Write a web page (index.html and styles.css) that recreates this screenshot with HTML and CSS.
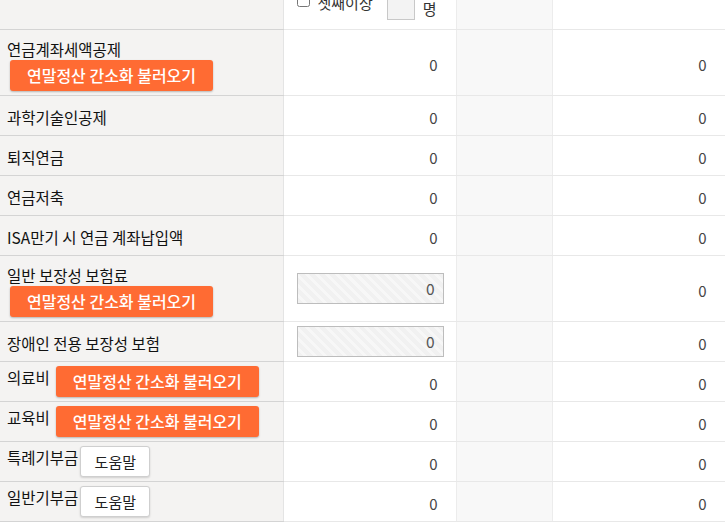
FILE: index.html
```html
<!DOCTYPE html>
<html>

	<head>
		<meta charset="UTF-8">
		<title>연말정산 공제 입력</title>
		<link rel="stylesheet" href="styles.css">
	</head>

	<body>
		<table class="deduct">
			<colgroup>
				<col class="c-label">
				<col class="c-main">
				<col class="c-mid">
				<col class="c-side">
			</colgroup>
			<tr class="row-top">
				<th></th>
				<td class="num">
					<div class="child">
						<input type="checkbox" class="chk">
						<span class="child-txt">셋째이상</span>
						<span class="child-box"></span>
						<span class="child-unit">명</span>
					</div>
				</td>
				<td class="mid"></td>
				<td class="num"></td>
			</tr>
			<tr>
				<th class="stack">
					<div class="lbl">연금계좌세액공제</div>
					<a href="##" class="btn-load">연말정산 간소화 불러오기</a>
				</th>
				<td class="num">0</td>
				<td class="mid"></td>
				<td class="num">0</td>
			</tr>
			<tr>
				<th>과학기술인공제</th>
				<td class="num">0</td>
				<td class="mid"></td>
				<td class="num">0</td>
			</tr>
			<tr>
				<th>퇴직연금</th>
				<td class="num">0</td>
				<td class="mid"></td>
				<td class="num">0</td>
			</tr>
			<tr>
				<th>연금저축</th>
				<td class="num">0</td>
				<td class="mid"></td>
				<td class="num">0</td>
			</tr>
			<tr>
				<th>ISA만기 시 연금 계좌납입액</th>
				<td class="num">0</td>
				<td class="mid"></td>
				<td class="num">0</td>
			</tr>
			<tr>
				<th class="stack">
					<div class="lbl">일반 보장성 보험료</div>
					<a href="##" class="btn-load">연말정산 간소화 불러오기</a>
				</th>
				<td class="inp"><div class="ro">0</div></td>
				<td class="mid"></td>
				<td class="num">0</td>
			</tr>
			<tr>
				<th>장애인 전용 보장성 보험</th>
				<td class="inp"><div class="ro">0</div></td>
				<td class="mid"></td>
				<td class="num">0</td>
			</tr>
			<tr>
				<th class="inline"><span>의료비</span><a href="##" class="btn-load">연말정산 간소화 불러오기</a></th>
				<td class="num">0</td>
				<td class="mid"></td>
				<td class="num">0</td>
			</tr>
			<tr>
				<th class="inline"><span>교육비</span><a href="##" class="btn-load">연말정산 간소화 불러오기</a></th>
				<td class="num">0</td>
				<td class="mid"></td>
				<td class="num">0</td>
			</tr>
			<tr>
				<th class="inline"><span>특례기부금</span><a href="##" class="btn-help">도움말</a></th>
				<td class="num">0</td>
				<td class="mid"></td>
				<td class="num">0</td>
			</tr>
			<tr>
				<th class="inline"><span>일반기부금</span><a href="##" class="btn-help">도움말</a></th>
				<td class="num">0</td>
				<td class="mid"></td>
				<td class="num">0</td>
			</tr>
		</table>
	</body>

</html>
```

FILE: styles.css
```css
* {
	margin: 0;
	padding: 0;
	box-sizing: border-box;
}

body {
	background: #fff;
	font-family: "Noto Sans CJK KR", "Noto Sans", sans-serif;
	font-size: 15.5px;
	color: #111;
}

.deduct {
	width: 725px;
	border-collapse: collapse;
	table-layout: fixed;
}

.c-label {
	width: 283px;
}

.c-main {
	width: 173px;
}

.c-mid {
	width: 96px;
}

.c-side {
	width: 173px;
}

.deduct tr {
	height: 40px;
}

.deduct th {
	background: #f4f3f2;
	border-bottom: 1px solid #d4d4d4;
	border-right: 1px solid #e4e4e4;
	text-align: left;
	font-weight: normal;
	padding: 4px 7px 0;
	line-height: 20px;
	white-space: nowrap;
}

.deduct td {
	border-bottom: 1px solid #e8e8e8;
	border-right: 1px solid #ececec;
	padding-top: 4px;
}

.deduct td.mid {
	background: #f8f8f8;
}

.deduct td.num {
	text-align: right;
	padding-right: 18px;
	color: #444;
	font-size: 15px;
}

/* 顶部被截掉的一行 */
.deduct tr.row-top {
	height: 29px;
}

.deduct .row-top td,
.deduct .row-top th {
	height: 29px;
	padding: 0;
}

.child {
	height: 28px;
	overflow: hidden;
	display: flex;
	align-items: flex-end;
	padding-left: 13px;
	color: #333;
	text-align: left;
}

.chk {
	width: 13px;
	height: 13px;
	margin: 0 8px 21px 0;
}

.child-txt {
	line-height: 20px;
	margin-bottom: 15px;
	margin-right: 14px;
}

.child-box {
	width: 28px;
	height: 30px;
	border: 1px solid #c8c8c8;
	background: #f3f3f3;
	margin-bottom: 8px;
	margin-right: 8px;
}

.child-unit {
	line-height: 20px;
	margin-bottom: 9px;
}

/* 标签+按钮 上下 */
.deduct th.stack {
	padding: 9px 7px 4px;
	vertical-align: top;
}

.stack .lbl {
	line-height: 20px;
}

.stack .btn-load {
	margin: 1px 0 0 3px;
}

/* 标签+按钮 一行 */
.deduct th.inline {
	padding: 4px 7px 4px;
	vertical-align: top;
}

.inline span {
	display: inline-block;
	vertical-align: top;
	padding-top: 1px;
}

.inline .btn-load {
	margin-left: 6px;
	vertical-align: top;
}

.inline .btn-help {
	margin-left: 2px;
	vertical-align: top;
}

.btn-load {
	display: inline-block;
	width: 203px;
	height: 31px;
	line-height: 30px;
	text-align: center;
	background: #ff6b33;
	color: #fff;
	font-size: 16px;
	font-weight: 500;
	text-decoration: none;
	border-radius: 3px;
	box-shadow: 0 1px 2px rgba(0, 0, 0, .25);
}

.btn-help {
	display: inline-block;
	width: 70px;
	height: 31px;
	line-height: 29px;
	text-align: center;
	background: #fff;
	color: #222;
	font-size: 15px;
	text-decoration: none;
	border: 1px solid #cfcfcf;
	border-radius: 3px;
	box-shadow: 0 1px 2px rgba(0, 0, 0, .15);
}

.deduct td.inp {
	padding: 0 0 0 13px;
}

.ro {
	width: 147px;
	height: 31px;
	line-height: 29px;
	border: 1px solid #bdbdbd;
	padding-right: 8px;
	text-align: right;
	color: #555;
	background: repeating-linear-gradient(45deg, #f1f1f1 0, #f1f1f1 4px, #f7f7f7 4px, #f7f7f7 7px);
}
```
